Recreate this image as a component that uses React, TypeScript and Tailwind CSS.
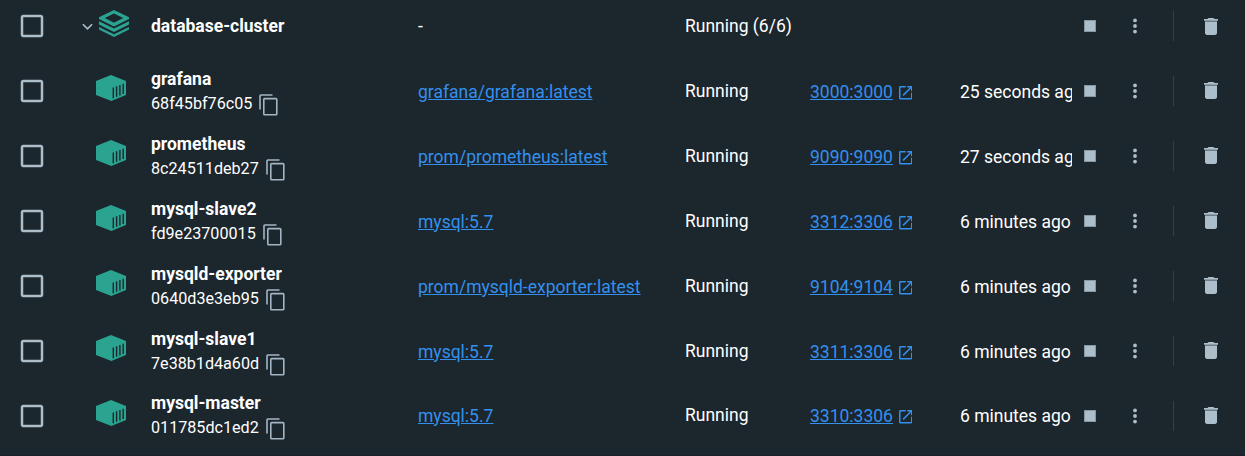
import React from "react";

type Container = {
  name: string;
  id: string;
  image: string;
  port: string;
  started: string;
};

const containers: Container[] = [
  { name: "grafana", id: "68f45bf76c05", image: "grafana/grafana:latest", port: "3000:3000", started: "25 seconds ago" },
  { name: "prometheus", id: "8c24511deb27", image: "prom/prometheus:latest", port: "9090:9090", started: "27 seconds ago" },
  { name: "mysql-slave2", id: "fd9e23700015", image: "mysql:5.7", port: "3312:3306", started: "6 minutes ago" },
  { name: "mysqld-exporter", id: "0640d3e3eb95", image: "prom/mysqld-exporter:latest", port: "9104:9104", started: "6 minutes ago" },
  { name: "mysql-slave1", id: "7e38b1d4a60d", image: "mysql:5.7", port: "3311:3306", started: "6 minutes ago" },
  { name: "mysql-master", id: "011785dc1ed2", image: "mysql:5.7", port: "3310:3306", started: "6 minutes ago" },
];

const rowGrid =
  "grid grid-cols-[80px_71px_267px_267px_125px_150px_112px_173px] items-center";

function Checkbox() {
  return (
    <div className="flex pl-[17px]">
      <svg viewBox="0 0 24 24" className="size-[30px] fill-[#adbecb]">
        <path d="M19 5v14H5V5h14m0-2H5c-1.1 0-2 .9-2 2v14c0 1.1.9 2 2 2h14c1.1 0 2-.9 2-2V5c0-1.1-.9-2-2-2z" />
      </svg>
    </div>
  );
}

function StackIcon() {
  return (
    <svg viewBox="0 0 30 27" className="h-[27px] w-[30px] fill-[#2aa391]">
      <path fillRule="evenodd" d="M15 0 30 7.3V9L15 16.4 0 9V7.3ZM15 3.4 5.8 8.1 15 12.8l9.2-4.7Z" />
      <path d="M0 11.3 15 18.6l15-7.3v3.3L15 21.9 0 14.6Z" />
      <path d="M0 16.9 15 24.2l15-7.3v2.6L15 27 0 19.5Z" />
    </svg>
  );
}

function ContainerIcon() {
  return (
    <svg viewBox="0 0 30 26" className="h-[26px] w-[30px]">
      <path d="M15 0 30 6v14l-14.6 6L0 20V6Z" fill="#2aa391" />
      <path
        d="M17.3 12.4v10.8M20.6 11.2v10.6M23.9 9.9v10.5M27.2 8.7v10.2"
        stroke="#1c262d"
        strokeWidth="1.4"
        fill="none"
      />
    </svg>
  );
}

function CopyIcon() {
  return (
    <svg viewBox="0 0 19 22" className="h-[22px] w-[19px] shrink-0" fill="none" stroke="#a3b5c3" strokeWidth="1.6">
      <path d="M1 15.5V1.8Q1 1 1.8 1H13.5" />
      <rect x="4.8" y="4.6" width="13" height="16.2" rx="0.8" />
    </svg>
  );
}

function Actions() {
  return (
    <div className="flex h-[30px] items-center pl-3">
      <div className="size-3 border border-[#8698a4] bg-[#adbecb]" />
      <svg viewBox="0 0 6 18" className="ml-9 h-[18px] w-[6px] fill-[#adbecb]">
        <circle cx="3" cy="3.4" r="1.9" />
        <circle cx="3" cy="9" r="1.9" />
        <circle cx="3" cy="14.6" r="1.9" />
      </svg>
      <div className="ml-[35px] h-[30px] w-px bg-[#334048]" />
      <svg viewBox="5 3 14 18" className="ml-[30px] h-[17px] w-[14px] fill-[#adbecb]" preserveAspectRatio="none">
        <path d="M6 19c0 1.1.9 2 2 2h8c1.1 0 2-.9 2-2V7H6v12z" />
        <path d="M6 6h12v1.2H6z" fill="#70818c" />
        <path d="M19 4h-3.5l-1-1h-5l-1 1H5v2h14V4z" />
      </svg>
    </div>
  );
}

function ContainerRow({ item }: { item: Container }) {
  return (
    <div className={`${rowGrid} group h-[65px]`}>
      <Checkbox />
      <div className="pl-4 pb-[5px]">
        <ContainerIcon />
      </div>
      <div className="flex flex-col pt-px group-last:pt-0 group-last:pb-px">
        <span className="h-[24px] text-[17.5px] leading-[25px] font-bold">{item.name}</span>
        <div className="flex h-[25px] items-center gap-[7px]">
          <span className="text-[16.15px] leading-[25px]">{item.id}</span>
          <span className="pt-[3px]">
            <CopyIcon />
          </span>
        </div>
      </div>
      <a className="pt-[3px] text-[#3390ee] underline group-last:pt-px">{item.image}</a>
      <span className="pt-px group-last:pt-0 group-last:pb-px">Running</span>
      <div className="flex items-center gap-[6px] pt-[3px] text-[#3390ee] group-last:pt-px">
        <a className="underline">{item.port}</a>
        <svg viewBox="3 3 18 18" className="mt-[2px] size-[13.5px]" fill="currentColor">
          <path d="M19 19H5V5h7V3H5c-1.11 0-2 .9-2 2v14c0 1.1.89 2 2 2h14c1.1 0 2-.9 2-2v-7h-2v7zM14 3v2h3.59l-9.83 9.83 1.41 1.41L19 6.41V10h2V3h-7z" />
        </svg>
      </div>
      <span className="overflow-hidden pt-[3px] group-last:pt-px">{item.started}</span>
      <Actions />
    </div>
  );
}

export default function App() {
  return (
    <main className="flex h-[456px] w-[1245px] flex-col overflow-hidden border-b border-[#1c1d2c] bg-[#1c262d] font-['Roboto',sans-serif] text-[17.5px] leading-[25px] whitespace-nowrap text-white">
      <div className={`${rowGrid} h-[58px] shrink-0 pb-[6px]`}>
        <Checkbox />
        <div className="-ml-20 flex w-[151px] items-center pb-[5px] pl-[82px]">
          <svg viewBox="0 0 12 8" className="mt-[6px] mr-[6px] h-[8px] w-[11px]" fill="none" stroke="#adbecb" strokeWidth="1.8">
            <path d="m1 1 5 5 5-5" />
          </svg>
          <StackIcon />
        </div>
        <span className="font-bold">database-cluster</span>
        <span>-</span>
        <span>Running (6/6)</span>
        <span />
        <span />
        <Actions />
      </div>
      <div className="shrink-0">
        {containers.map((item) => (
          <ContainerRow key={item.id} item={item} />
        ))}
      </div>
    </main>
  );
}
